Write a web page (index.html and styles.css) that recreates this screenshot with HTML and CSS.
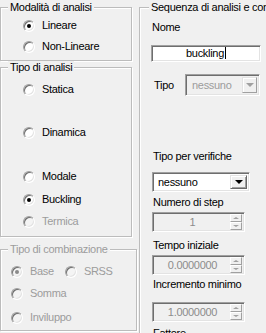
FILE: index.html
```html
<!DOCTYPE html>
<html lang="it">
<head>
<meta charset="utf-8">
<link rel="stylesheet" href="styles.css">
</head>
<body>
<div class="window">
  <div class="left">
    <div class="group g1">
      <div class="title">Modalità di analisi</div>
      <div class="content c1">
        <div class="radio r-a"><span class="circle on"></span>Lineare</div>
        <div class="radio r-b"><span class="circle"></span>Non-Lineare</div>
      </div>
    </div>
    <div class="group g2">
      <div class="title">Tipo di analisi</div>
      <div class="content c1">
        <div class="radio s1"><span class="circle"></span>Statica</div>
        <div class="radio s2"><span class="circle"></span>Dinamica</div>
        <div class="radio s3"><span class="circle"></span>Modale</div>
        <div class="radio s4"><span class="circle on"></span>Buckling</div>
        <div class="radio s5 dis"><span class="circle"></span>Termica</div>
      </div>
    </div>
    <div class="group g3 dis">
      <div class="title">Tipo di combinazione</div>
      <div class="content c3">
        <div class="pair t1">
          <div class="radio"><span class="circle on"></span>Base</div>
          <div class="radio srss"><span class="circle"></span>SRSS</div>
        </div>
        <div class="radio t2"><span class="circle"></span>Somma</div>
        <div class="radio t3"><span class="circle"></span>Inviluppo</div>
      </div>
    </div>
  </div>
  <div class="group gr">
    <div class="title tr">Sequenza di analisi e condizioni</div>
    <div class="content cr">
      <div class="lbl l-nome">Nome</div>
      <div class="input"><span class="caret">buckling</span></div>
      <div class="tipo-row">
        <div class="lbl l-tipo">Tipo</div>
        <div class="select sel-dis"><span class="sel-text">nessuno</span><span class="dd"><span class="tri"></span></span></div>
      </div>
      <div class="lbl l-ver">Tipo per verifiche</div>
      <div class="select sel-en"><span class="sel-text">nessuno</span><span class="dd"><span class="tri"></span></span></div>
      <div class="lbl l-step">Numero di step</div>
      <div class="spin sp1"><span class="val">1</span><span class="btns"><span class="sb"><span class="up"></span></span><span class="sb"><span class="down"></span></span></span></div>
      <div class="lbl l-t0">Tempo iniziale</div>
      <div class="spin sp2"><span class="val">0.0000000</span><span class="btns"><span class="sb"><span class="up"></span></span><span class="sb"><span class="down"></span></span></span></div>
      <div class="lbl l-inc">Incremento minimo</div>
      <div class="spin sp3"><span class="val">1.0000000</span><span class="btns"><span class="sb"><span class="up"></span></span><span class="sb"><span class="down"></span></span></span></div>
      <div class="lbl l-f">Fattore</div>
    </div>
  </div>
</div>
</body>
</html>
```
FILE: styles.css
```css
* { box-sizing: border-box; }
html, body { margin: 0; padding: 0; }
body {
  width: 266px;
  height: 333px;
  overflow: hidden;
  background: #f0f0f0;
  font-family: "Liberation Sans", Arial, sans-serif;
  font-size: 11px;
  letter-spacing: -0.3px;
  color: #000;
}
.window { display: flex; align-items: flex-start; width: 420px; }
.left { display: flex; flex-direction: column; width: 137px; flex: none; }

.group {
  border: 1px solid #bcbcbc;
  box-shadow: 1px 1px 0 #fff, inset 1px 1px 0 #fff;
  display: flex;
  flex-direction: column;
  flex: none;
}
.title {
  align-self: flex-start;
  margin: -7px 0 0 7px;
  padding: 0 2px;
  height: 13px;
  line-height: 13px;
  background: #f0f0f0;
  white-space: nowrap;
}
.dis, .dis .title { color: #9c9c9c; }

.g1 { margin-top: 7px; width: 132px; height: 54px; }
.g2 { margin-top: 6px; width: 132px; height: 170px; }
.g3 { margin-top: 12px; width: 137px; height: 82px; }
.gr { margin: 7px 0 0 2px; width: 220px; height: 400px; }

.content { display: flex; flex-direction: column; }
.c1 { padding-left: 22px; }
.c3 { padding-left: 10px; }
.cr { padding-left: 11px; }
.tr { margin-left: 9px; }

.radio {
  display: flex;
  align-items: center;
  height: 13px;
  line-height: 13px;
  white-space: nowrap;
}
.circle {
  width: 12px;
  height: 12px;
  margin-right: 7px;
  border-radius: 50%;
  border: 1px solid;
  border-color: #a0a0a0 #ffffff #ffffff #a0a0a0;
  box-shadow: inset 1px 1px 0 #6e6e6e, inset -1px -1px 0 #e3e3e3;
  background: #fff;
  display: flex;
  align-items: center;
  justify-content: center;
  flex: none;
}
.circle.on::after {
  content: "";
  width: 4px;
  height: 4px;
  border-radius: 50%;
  background: #000;
}
.dis .circle { background: #f4f4f4; }
.dis .circle.on::after { background: #8a8a8a; }

.r-a { margin-top: 5px; }
.r-b { margin-top: 8px; }
.s1 { margin-top: 9px; }
.s2 { margin-top: 30px; }
.s3 { margin-top: 31px; }
.s4 { margin-top: 10px; }
.s5 { margin-top: 9px; }

.pair { display: flex; margin-top: 9px; }
.srss { margin-left: 11px; }
.t2 { margin-top: 9px; }
.t3 { margin-top: 11px; }

.lbl { height: 13px; line-height: 13px; white-space: nowrap; padding-left: 2px; }
.l-nome { margin-top: 7px; padding-left: 1px; }
.l-ver { margin-top: 54px; }
.l-step { margin-top: 4px; }
.l-t0 { margin-top: 7px; }
.l-inc { margin-top: 3px; }
.l-f { margin-top: 5px; }

.input, .select, .spin {
  border: 1px solid;
  border-color: #a0a0a0 #ffffff #ffffff #a0a0a0;
  box-shadow: inset 1px 1px 0 #6e6e6e, inset -1px -1px 0 #e3e3e3;
}
.input {
  margin-top: 11px;
  width: 110px;
  height: 17px;
  background: #fff;
  text-align: center;
  line-height: 15px;
}
.caret { border-right: 1px solid #000; padding-right: 1px; }

.tipo-row { display: flex; align-items: center; margin-top: 12px; height: 22px; }
.l-tipo { width: 34px; padding-left: 3px; }
.select {
  display: flex;
  align-items: center;
  justify-content: space-between;
  padding: 2px;
}
.sel-dis { width: 75px; height: 22px; background: #f0f0f0; color: #9c9c9c; }
.sel-en { margin: 9px 0 0 1px; width: 98px; height: 20px; background: #fff; }
.sel-text { padding-left: 3px; line-height: 13px; }
.sel-dis .sel-text { padding-left: 4px; }
.dd {
  width: 16px;
  height: 100%;
  background: #f0f0f0;
  border: 1px solid;
  border-color: #e3e3e3 #696969 #696969 #e3e3e3;
  box-shadow: inset 1px 1px 0 #fff, inset -1px -1px 0 #a0a0a0;
  display: flex;
  align-items: center;
  justify-content: center;
}
.sel-dis .dd { width: 15px; border-color: #e3e3e3 #a0a0a0 #a0a0a0 #e3e3e3; box-shadow: inset 1px 1px 0 #fff; }
.sel-en .dd { width: 17px; }
.tri {
  width: 0;
  height: 0;
  border-left: 4px solid transparent;
  border-right: 4px solid transparent;
  border-top: 4px solid #000;
}
.sel-dis .tri { border-top-color: #a0a0a0; }

.spin {
  display: flex;
  align-items: center;
  width: 93px;
  height: 20px;
  margin-left: 1px;
  padding: 2px;
  background: #f0f0f0;
  color: #8c8c8c;
}
.sp1 { margin-top: 3px; }
.sp2 { margin-top: 3px; }
.sp3 { margin-top: 11px; }
.val { flex: 1; text-align: center; line-height: 13px; }
.btns { display: flex; flex-direction: column; width: 12px; height: 16px; }
.sb {
  flex: 1;
  border: 1px solid;
  border-color: #ffffff #a0a0a0 #a0a0a0 #ffffff;
  background: #f0f0f0;
  display: flex;
  align-items: center;
  justify-content: center;
}
.up, .down { width: 0; height: 0; border-left: 3px solid transparent; border-right: 3px solid transparent; }
.up { border-bottom: 2px solid #a0a0a0; }
.down { border-top: 2px solid #a0a0a0; }
```
